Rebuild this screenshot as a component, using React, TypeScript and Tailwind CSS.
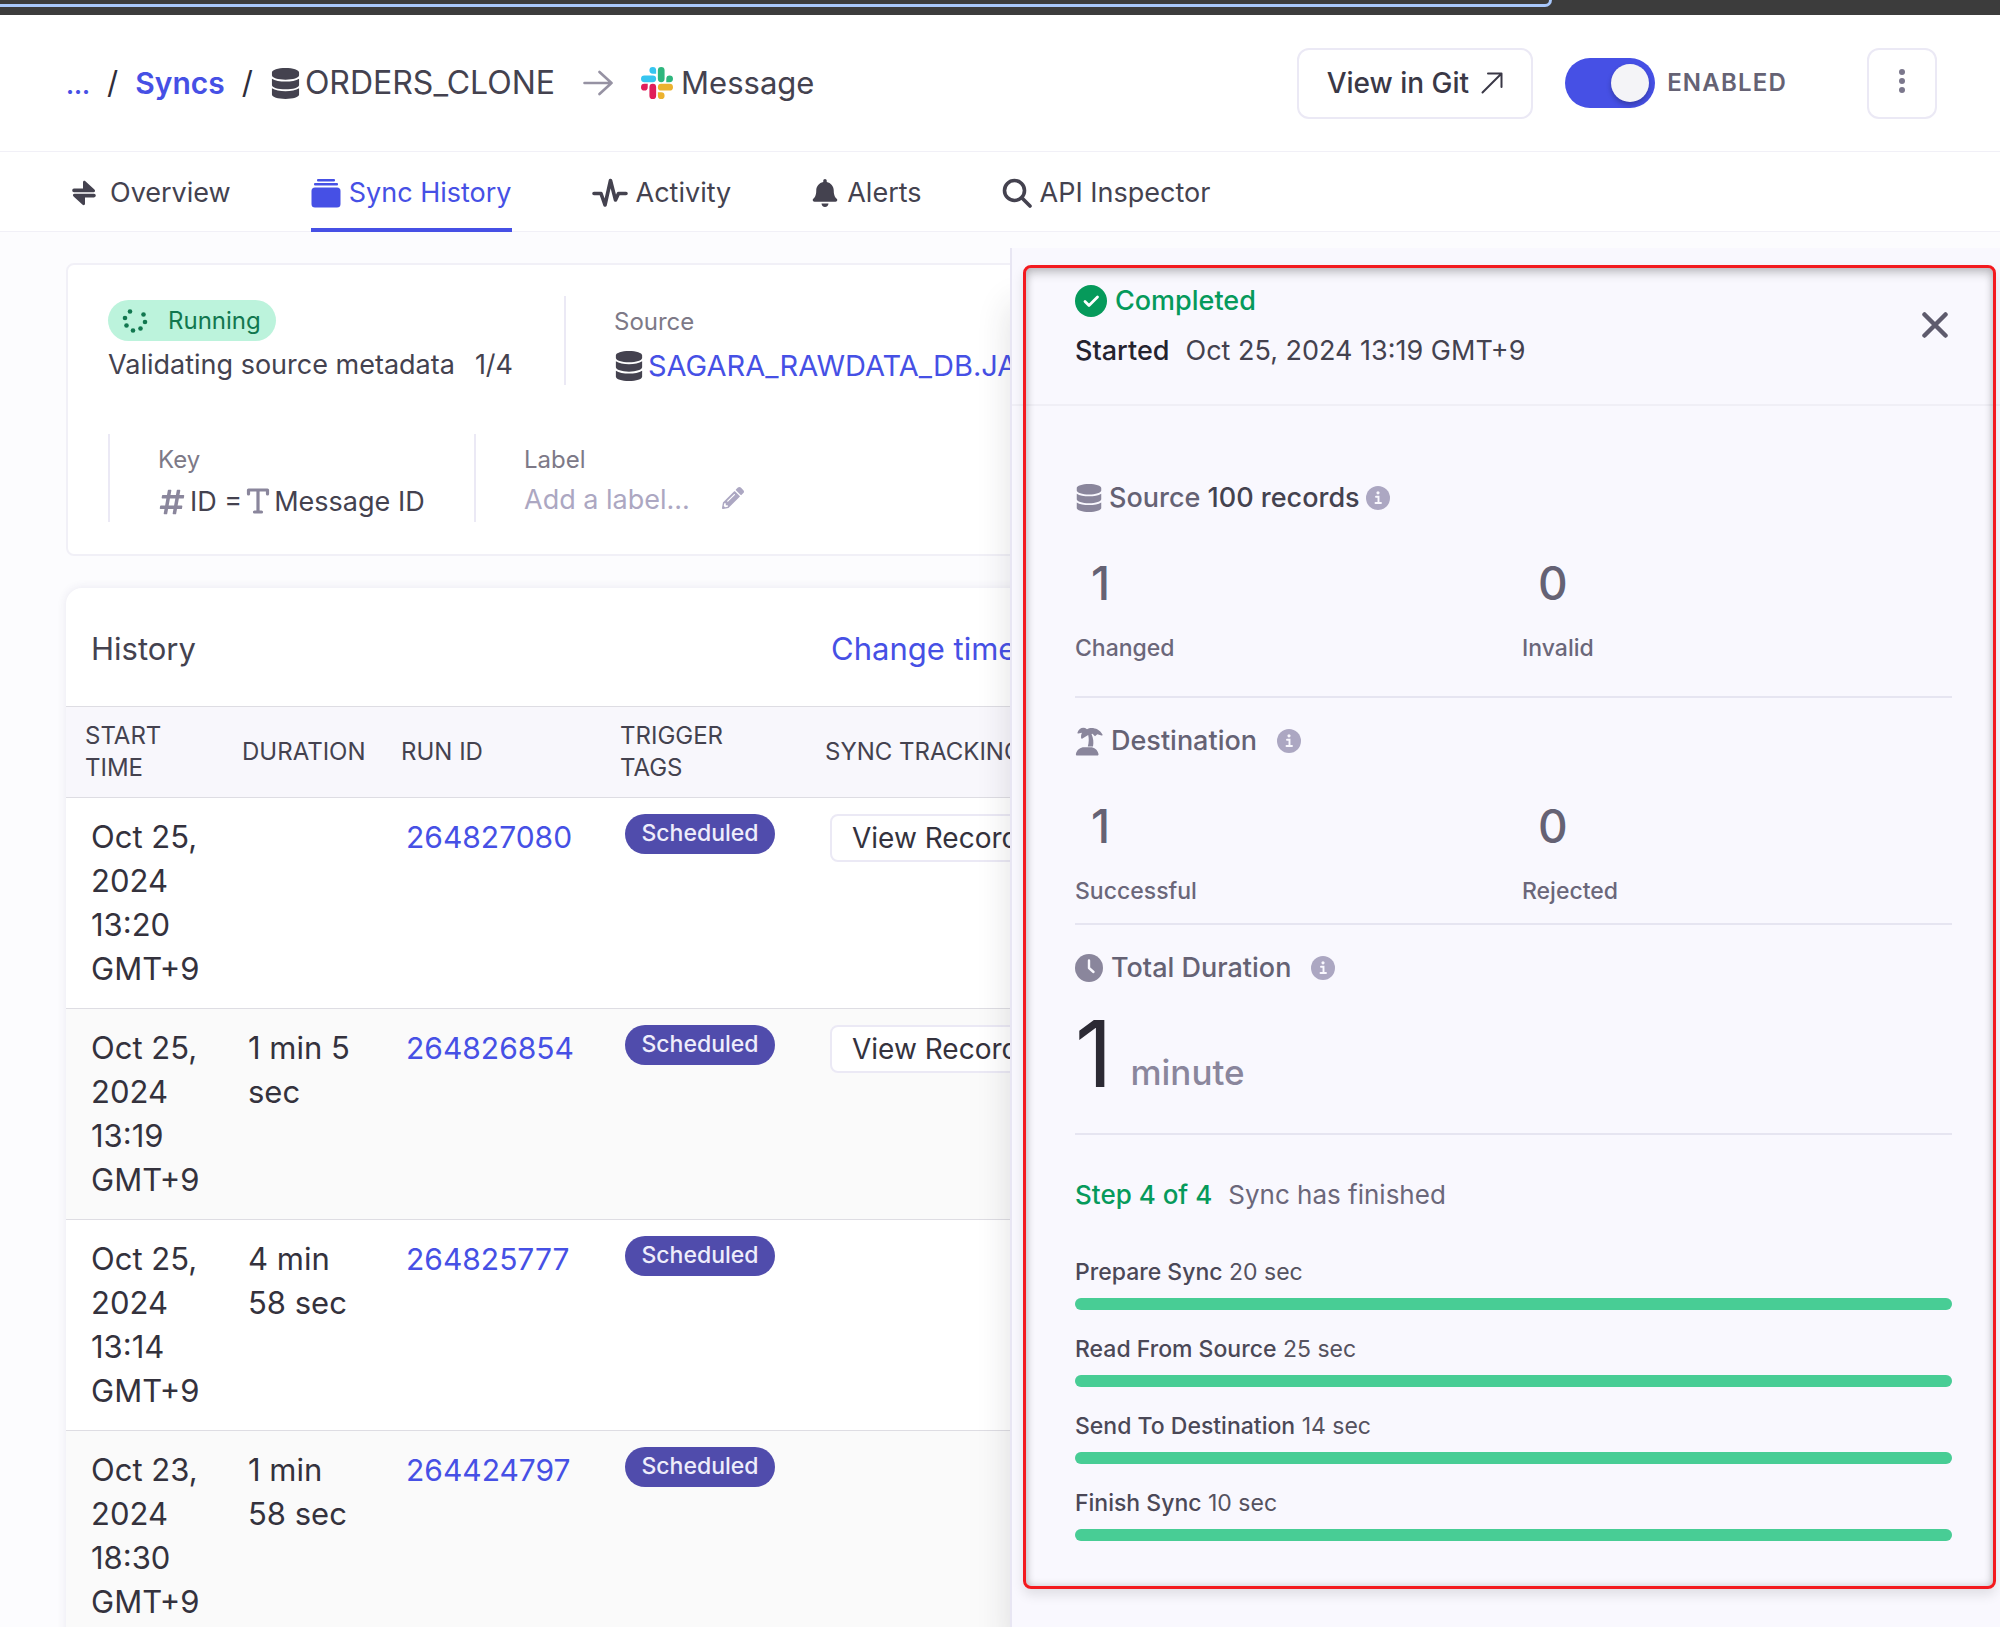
import React, { useState } from 'react';
import { FaBell, FaDatabase, FaHashtag, FaPencilAlt } from 'react-icons/fa';

interface Run {
  id: string;
  startTime: string;
  duration: string;
  tag: string;
  hasRecords: boolean;
}

interface Stat {
  value: number;
  label: string;
}

const runs: Run[] = [
  { id: '264827080', startTime: 'Oct 25, 2024 13:20 GMT+9', duration: '', tag: 'Scheduled', hasRecords: true },
  { id: '264826854', startTime: 'Oct 25, 2024 13:19 GMT+9', duration: '1 min 5 sec', tag: 'Scheduled', hasRecords: true },
  { id: '264825777', startTime: 'Oct 25, 2024 13:14 GMT+9', duration: '4 min 58 sec', tag: 'Scheduled', hasRecords: false },
  { id: '264424797', startTime: 'Oct 23, 2024 18:30 GMT+9', duration: '1 min 58 sec', tag: 'Scheduled', hasRecords: false },
];

const steps = [
  { name: 'Prepare Sync', time: '20 sec', progress: 100 },
  { name: 'Read From Source', time: '25 sec', progress: 100 },
  { name: 'Send To Destination', time: '14 sec', progress: 100 },
  { name: 'Finish Sync', time: '10 sec', progress: 100 },
];

function SlackIcon() {
  return (
    <svg viewBox="0 0 24 24" className="size-8 shrink-0 self-center">
      <path fill="#E01E5A" d="M5.042 15.165a2.528 2.528 0 0 1-2.52 2.523A2.528 2.528 0 0 1 0 15.165a2.527 2.527 0 0 1 2.522-2.52h2.52v2.52zM6.313 15.165a2.527 2.527 0 0 1 2.521-2.52 2.527 2.527 0 0 1 2.521 2.52v6.313A2.528 2.528 0 0 1 8.834 24a2.528 2.528 0 0 1-2.521-2.522v-6.313z" />
      <path fill="#36C5F0" d="M8.834 5.042a2.528 2.528 0 0 1-2.521-2.52A2.528 2.528 0 0 1 8.834 0a2.528 2.528 0 0 1 2.521 2.522v2.52H8.834zM8.834 6.313a2.528 2.528 0 0 1 2.521 2.521 2.528 2.528 0 0 1-2.521 2.521H2.522A2.528 2.528 0 0 1 0 8.834a2.528 2.528 0 0 1 2.522-2.521h6.312z" />
      <path fill="#2EB67D" d="M18.956 8.834a2.528 2.528 0 0 1 2.522-2.521A2.528 2.528 0 0 1 24 8.834a2.528 2.528 0 0 1-2.522 2.521h-2.522V8.834zM17.688 8.834a2.528 2.528 0 0 1-2.523 2.521 2.527 2.527 0 0 1-2.52-2.521V2.522A2.527 2.527 0 0 1 15.165 0a2.528 2.528 0 0 1 2.523 2.522v6.312z" />
      <path fill="#ECB22E" d="M15.165 18.956a2.528 2.528 0 0 1 2.523 2.522A2.528 2.528 0 0 1 15.165 24a2.527 2.527 0 0 1-2.52-2.522v-2.522h2.52zM15.165 17.688a2.527 2.527 0 0 1-2.52-2.523 2.526 2.526 0 0 1 2.52-2.52h6.313A2.527 2.527 0 0 1 24 15.165a2.528 2.528 0 0 1-2.522 2.523h-6.313z" />
    </svg>
  );
}

function OverviewIcon() {
  return (
    <svg viewBox="0 0 24 26" className="h-[26px] w-9 shrink-0" fill="currentColor">
      <path d="M2 8.6h9V2.2c0-1.4 1.4-1.9 2.4-1l9 8.2c1.3 1.2.6 2.8-.9 2.8H2a1.8 1.8 0 0 1 0-3.6z" />
      <path d="M22 17.4h-9v6.4c0 1.4-1.4 1.9-2.4 1l-9-8.2c-1.3-1.2-.6-2.8.9-2.8H22a1.8 1.8 0 0 1 0 3.6z" />
    </svg>
  );
}

function StackIcon() {
  return (
    <svg viewBox="0 0 30 30" className="size-[30px] shrink-0" fill="currentColor">
      <rect x="6" y="1" width="18" height="2.5" rx="1" />
      <rect x="3" y="5" width="24" height="2.6" rx="1" />
      <rect x="0.5" y="9.5" width="29" height="20" rx="3.5" />
    </svg>
  );
}

function ActivityIcon() {
  return (
    <svg viewBox="0 0 36 30" className="h-[30px] w-9 shrink-0" fill="none" stroke="currentColor" strokeWidth="3.6" strokeLinecap="round" strokeLinejoin="round">
      <path d="M2 15.5h7l4 11.5 5.500-24.500 5 19.500 3-6.500H34" />
    </svg>
  );
}

function SearchIcon() {
  return (
    <svg viewBox="0 0 30 30" className="size-[30px] shrink-0" fill="none" stroke="currentColor" strokeWidth="3.6" strokeLinecap="round">
      <circle cx="12.5" cy="12.5" r="10" />
      <path d="M20 20l8 8" />
    </svg>
  );
}

function SpinnerIcon() {
  return (
    <svg viewBox="0 0 26 26" className="size-[26px] shrink-0" fill="currentColor">
      <circle cx="8" cy="3.5" r="2.3" />
      <circle cx="21.5" cy="6.5" r="2.3" />
      <circle cx="3" cy="10" r="2.3" />
      <circle cx="23" cy="14" r="2.3" />
      <circle cx="4.5" cy="17.5" r="2.3" />
      <circle cx="18.5" cy="20.5" r="2.3" />
      <circle cx="11" cy="22.5" r="2.3" />
    </svg>
  );
}

function TextTypeIcon() {
  return (
    <svg viewBox="0 0 24 28" className="h-7 w-6 shrink-0" fill="none" stroke="currentColor" strokeWidth="3.2" strokeLinecap="round" strokeLinejoin="round">
      <path d="M2.5 6V2h19v4M12 2v22M8.500 24h7" />
    </svg>
  );
}

function IslandIcon() {
  return (
    <svg viewBox="0 0 28 30" className="h-[30px] w-7 shrink-0" fill="currentColor">
      <path d="M2.5 6.5C4 2 8.5.5 12 3.2 16 .8 24 2 27.5 8.5c.3.7-.3 1.2-1 1l-4.200-1.300-2.300 2-2.600-2.400-.9.2c1.900 4.200 2.300 8.300 1.500 12.500h-5.200c1.200-4.200 1.200-8 .4-11.500L7.500 12.500c-.6.5-1.300.2-1.400-.5C6 10 6 8.500 7 6.800l-3.600.8c-.7.1-1.100-.4-.9-1.100z" />
      <path d="M2 29.5c-.8 0-1.300-.7-1.100-1.500C2 23.500 5.500 21.300 9 21.300h6.500c3.800 0 6.800 2.200 8 6.700.2.8-.3 1.500-1.100 1.500z" />
    </svg>
  );
}

function ClockIcon() {
  return (
    <svg viewBox="0 0 28 28" className="size-7 shrink-0">
      <circle cx="14" cy="14" r="14" fill="currentColor" />
      <path d="M14 6.5V14l4.500 4" fill="none" stroke="#f9f8fe" strokeWidth="2.4" strokeLinecap="round" strokeLinejoin="round" />
    </svg>
  );
}

function InfoIcon() {
  return (
    <svg viewBox="0 0 24 24" className="size-6 shrink-0 text-[#aca7c2]">
      <circle cx="12" cy="12" r="12" fill="currentColor" />
      <circle cx="12" cy="6.8" r="1.6" fill="#f9f8fe" />
      <path d="M10 10.800h2.500v6M9.500 17h5.500" fill="none" stroke="#f9f8fe" strokeWidth="1.9" strokeLinecap="round" />
    </svg>
  );
}

function CheckCircleIcon() {
  return (
    <svg viewBox="0 0 32 32" className="size-8 shrink-0">
      <circle cx="16" cy="16" r="16" fill="currentColor" />
      <path d="M10 16.500l4 4 8.500-8.500" fill="none" stroke="#fff" strokeWidth="2.8" strokeLinecap="round" strokeLinejoin="round" />
    </svg>
  );
}

const tabs = [
  { name: 'Overview', icon: <OverviewIcon /> },
  { name: 'Sync History', icon: <StackIcon /> },
  { name: 'Activity', icon: <ActivityIcon /> },
  { name: 'Alerts', icon: <FaBell className="size-7" /> },
  { name: 'API Inspector', icon: <SearchIcon /> },
];

/** Breadcrumb on the left, sync controls on the right. */
function Header() {
  const [enabled, setEnabled] = useState(true);

  return (
    <header className="flex h-[137px] shrink-0 items-center justify-between border-b border-[#f1f0f7] bg-white pr-[63px] pl-[66px]">
      <nav aria-label="Breadcrumb" className="flex items-baseline text-[31px] leading-10 text-[#44424f]">
        <a href="#" className="text-2xl font-bold text-[#4650e5]">...</a>
        <span className="mx-[17px] text-[#2f2d3a]">/</span>
        <a href="#syncs" className="text-[30px] font-semibold text-[#4650e5]">Syncs</a>
        <span className="mx-[17px] text-[#2f2d3a]">/</span>
        <FaDatabase className="mr-1 size-[31px] self-center text-[#44424f]" />
        <span className="text-[32px]">ORDERS_CLONE</span>
        <svg viewBox="0 0 30 26" className="mx-7 h-[26px] w-[30px] self-center" fill="none" stroke="#9692a3" strokeWidth="2.6" strokeLinecap="round" strokeLinejoin="round">
          <path d="M1.500 13h27M16.500 2l12 11-12 11" />
        </svg>
        <SlackIcon />
        <span className="ml-2">Message</span>
      </nav>

      <div className="flex items-center">
        <button className="flex h-[71px] items-center gap-3 rounded-xl border-2 border-[#ebe9f5] px-7 text-[28px] font-medium text-[#3a3846]">
          View in Git
          <svg viewBox="0 0 22 22" className="size-[22px]" fill="none" stroke="currentColor" strokeWidth="2" strokeLinecap="round" strokeLinejoin="round">
            <path d="M1.500 20.500l19-19M7 1.500h13.500V15" />
          </svg>
        </button>
        <label className="ml-8 flex items-center gap-3 text-2xl font-semibold tracking-wider text-[#656274]">
          <input
            type="checkbox"
            role="switch"
            checked={enabled}
            onChange={(e) => setEnabled(e.target.checked)}
            className="flex h-[50px] w-[90px] appearance-none items-center rounded-full bg-[#b5b2c4] px-[6px] before:size-[38px] before:rounded-full before:bg-[#f4f4f7] before:shadow-[0_3px_5px_rgba(0,0,0,0.25)] checked:justify-end checked:bg-[#4650e5]"
          />
          ENABLED
        </label>
        <button aria-label="More actions" className="ml-20 flex h-[71px] w-[70px] items-center justify-center rounded-xl border-2 border-[#ebe9f5] pb-1 text-[#7b778c]">
          <svg viewBox="0 0 6 26" className="h-[26px] w-[6px]" fill="currentColor">
            <circle cx="3" cy="4" r="3" />
            <circle cx="3" cy="13" r="3" />
            <circle cx="3" cy="22" r="3" />
          </svg>
        </button>
      </div>
    </header>
  );
}

function Tabs() {
  const [active, setActive] = useState('Sync History');

  return (
    <div className="flex h-20 shrink-0 gap-20 border-b border-[#f1f0f7] bg-white pl-[66px]">
      {tabs.map((tab) => (
        <button
          key={tab.name}
          onClick={() => setActive(tab.name)}
          className={`-mb-px flex items-center gap-2 border-b-4 pt-[6px] text-[27px] ${
            active === tab.name ? 'border-[#4650e5] text-[#4650e5]' : 'border-transparent text-[#44424f]'
          }`}
        >
          {tab.icon}
          {tab.name}
        </button>
      ))}
    </div>
  );
}

function SummaryCard() {
  return (
    <section className="rounded-lg border-2 border-[#f1f0f7] bg-white px-10 pt-[31px] pb-8 text-[27px] leading-9 whitespace-nowrap text-[#44424f]">
      <div className="flex h-[89px]">
        <div className="w-[456px] pt-1">
          <div className="mb-[6px] flex h-[41px] w-[168px] items-center gap-5 rounded-full bg-[#bcf3dc] pl-[14px] text-2xl text-[#11774f]">
            <SpinnerIcon />
            Running
          </div>
          Validating source metadata<span className="ml-5">1/4</span>
        </div>
        <div className="border-l-2 border-[#ebe9f5] pt-2 pl-12">
          <div className="mb-2 text-2xl leading-9 text-[#7d7987]">Source</div>
          <a href="#source" className="flex items-center gap-1 text-[29px] text-[#4650e5]">
            <FaDatabase className="size-[30px] text-[#44424f]" />
            SAGARA_RAWDATA_DB.JA
          </a>
        </div>
      </div>

      <div className="mt-[49px] flex h-[88px]">
        <div className="w-[366px] border-l-2 border-[#ebe9f5] pt-2 pl-12">
          <div className="mb-[6px] text-2xl leading-9 text-[#7d7987]">Key</div>
          <div className="flex items-center gap-1">
            <FaHashtag className="size-7 text-[#8a869c]" />
            <span>ID =</span>
            <span className="text-[#8a869c]"><TextTypeIcon /></span>
            <span>Message ID</span>
          </div>
        </div>
        <div className="border-l-2 border-[#ebe9f5] pt-2 pl-12">
          <div className="mb-1 text-2xl leading-9 text-[#7d7987]">Label</div>
          <button className="flex items-center gap-8 text-[#aca7c2]">
            Add a label...
            <FaPencilAlt className="mb-1 size-[22px]" />
          </button>
        </div>
      </div>
    </section>
  );
}

function HistoryCard() {
  return (
    <section className="overflow-hidden rounded-t-2xl bg-white shadow-[0_0_10px_rgba(60,50,120,0.10)]">
      <div className="flex h-[118px] items-center pt-1 pl-[25px] text-[31px]">
        <h2 className="w-[740px] text-[#44424f]">History</h2>
        <button className="text-[#4650e5]">Change time</button>
      </div>
      <table className="w-full table-fixed text-left">
        <colgroup>
          <col className="w-[157px]" />
          <col className="w-[159px]" />
          <col className="w-[219px]" />
          <col className="w-[205px]" />
          <col />
        </colgroup>
        <thead>
          <tr className="h-[91px] border-y border-[#dedde3] bg-[#f8f7fc] text-2xl leading-8 text-[#44424f]">
            <th className="pl-[19px] pr-8 font-normal">START TIME</th>
            <th className="pl-[19px] font-normal">DURATION</th>
            <th className="pl-[19px] font-normal">RUN ID</th>
            <th className="pl-[19px] pr-16 font-normal">TRIGGER TAGS</th>
            <th className="pl-[19px] font-normal">SYNC TRACKING</th>
          </tr>
        </thead>
        <tbody>
          {runs.map((run) => (
            <tr key={run.id} className="border-b border-[#dedde3] align-top text-[31px] leading-[44px] text-[#34323d] even:bg-[#fafafa]">
              <td className="py-[17px] pr-5 pl-[25px]">{run.startTime}</td>
              <td className="py-[17px] pr-5 pl-[25px]">{run.duration}</td>
              <td className="py-[17px] pl-6 text-[30px]">
                <a href={`#run-${run.id}`} className="text-[#4650e5]">{run.id}</a>
              </td>
              <td className="py-4 pl-6">
                <span className="flex h-10 w-[150px] justify-center rounded-full bg-[#504cac] text-[23px] leading-[38px] font-medium text-[#eeedfb]">{run.tag}</span>
              </td>
              <td className="py-4 pl-6">
                {run.hasRecords && (
                  <button className="flex h-12 items-center rounded-lg border-2 border-[#ebe9f5] bg-white px-5 text-[28px] whitespace-nowrap text-[#34323d]">
                    View Records
                  </button>
                )}
              </td>
            </tr>
          ))}
        </tbody>
      </table>
    </section>
  );
}

function StatPair({ stats }: { stats: Stat[] }) {
  return (
    <dl className="grid grid-cols-[447px_1fr]">
      {stats.map((stat) => (
        <div key={stat.label} className="flex flex-col-reverse gap-6">
          <dt className="text-[23px] leading-8 font-medium text-[#6b677a]">{stat.label}</dt>
          <dd className="pl-4 text-[46px] leading-[50px] font-medium text-[#656274]">{stat.value}</dd>
        </div>
      ))}
    </dl>
  );
}

/** Details of one finished run, slides over the history table. */
function RunDrawer() {
  return (
    <aside className="absolute top-[248px] right-0 bottom-0 w-[49.5%] border-l-2 border-[#e8e6f3] bg-[#f9f8fe] shadow-[-16px_40px_32px_-16px_rgba(40,40,50,0.14)]">
      <div className="flex h-[158px] items-start justify-between border-b-2 border-[#f0eff6] pt-[34px] pr-[50px] pl-[63px] text-[27px]">
        <div className="leading-[38px]">
          <div className="flex items-center gap-2 font-medium text-[#069a5b]">
            <CheckCircleIcon />
            Completed
          </div>
          <div className="mt-3 text-[#44424f]">
            <span className="mr-4 font-medium text-[#25232f]">Started</span>
            Oct 25, 2024 13:19 GMT+9
          </div>
        </div>
        <button aria-label="Close" className="mt-7 flex size-[30px] items-center justify-center text-[#5e5b6d]">
          <svg viewBox="0 0 26 26" className="size-[26px]" fill="none" stroke="currentColor" strokeWidth="4.5" strokeLinecap="round">
            <path d="M2.500 2.500l21 21M23.500 2.500l-21 21" />
          </svg>
        </button>
      </div>

      <div className="pr-12 pl-[63px]">
        <section className="border-b-2 border-[#e6e5f1] pt-[74px] pb-8">
          <h3 className="mb-[42px] flex items-center gap-[6px] text-[27px] leading-9 font-medium text-[#656274]">
            <FaDatabase className="size-7 text-[#8a869c]" />
            <span>Source <span className="text-[#44424f]">100 records</span></span>
            <InfoIcon />
          </h3>
          <StatPair stats={[{ value: 1, label: 'Changed' }, { value: 0, label: 'Invalid' }]} />
        </section>

        <section className="border-b-2 border-[#e6e5f1] pt-[25px] pb-4">
          <h3 className="mb-[42px] flex items-center gap-2 text-[27px] leading-9 font-medium text-[#656274]">
            <span className="text-[#8a869c]"><IslandIcon /></span>
            <span className="mr-3">Destination</span>
            <InfoIcon />
          </h3>
          <StatPair stats={[{ value: 1, label: 'Successful' }, { value: 0, label: 'Rejected' }]} />
        </section>

        <section className="h-[210px] border-b-2 border-[#e6e5f1] pt-[25px]">
          <h3 className="flex items-center gap-2 text-[27px] leading-9 font-medium text-[#656274]">
            <span className="text-[#8a869c]"><ClockIcon /></span>
            <span className="mr-3">Total Duration</span>
            <InfoIcon />
          </h3>
          <p className="mt-[18px] flex items-end gap-[18px]">
            <span className="text-[92px] leading-[100px] text-[#2c2a34]">1</span>
            <span className="text-[35px] leading-16 font-medium text-[#8a869c]">minute</span>
          </p>
        </section>

        <section className="pt-[42px]">
          <p className="mb-[43px] text-[26px] leading-9 text-[#6b677a]">
            <span className="mr-4 font-medium text-[#069a5b]">Step 4 of 4</span>
            Sync has finished
          </p>
          {steps.map((step) => (
            <div key={step.name} className="mb-[23px]">
              <div className="mb-[10px] text-[23px] leading-8 text-[#55525f]">
                <span className="font-medium text-[#4b4857]">{step.name}</span> {step.time}
              </div>
              <div role="progressbar" aria-label={step.name} aria-valuenow={step.progress} className="h-3 rounded-full bg-[#e6e5f1]">
                <div className="h-3 rounded-full bg-[#48cd95]" style={{ width: `${step.progress}%` }} />
              </div>
            </div>
          ))}
        </section>
      </div>

      {/* Highlight frame around the run details */}
      <div className="pointer-events-none absolute top-[17px] right-1 bottom-[38px] left-[11px] rounded-lg border-3 border-[#f31a1f] shadow-[0_6px_12px_rgba(0,0,0,0.10),inset_0_6px_10px_rgba(0,0,0,0.16),inset_0_0_8px_rgba(0,0,0,0.18)]" />
    </aside>
  );
}

export default function App() {
  return (
    <div className="relative flex h-screen flex-col overflow-hidden bg-[#fcfcfe] font-['Inter',sans-serif]">
      {/* Bottom edge of the browser toolbar with the focused address bar */}
      <div className="h-[15px] shrink-0 bg-[#3c3c3c]">
        <div className="h-[7px] w-[77.6%] rounded-br-xl border-r-3 border-b-3 border-[#a8c7fa]" />
      </div>
      <Header />
      <Tabs />
      <main className="flex flex-col gap-8 px-[66px] pt-[31px]">
        <SummaryCard />
        <HistoryCard />
      </main>
      <RunDrawer />
    </div>
  );
}
